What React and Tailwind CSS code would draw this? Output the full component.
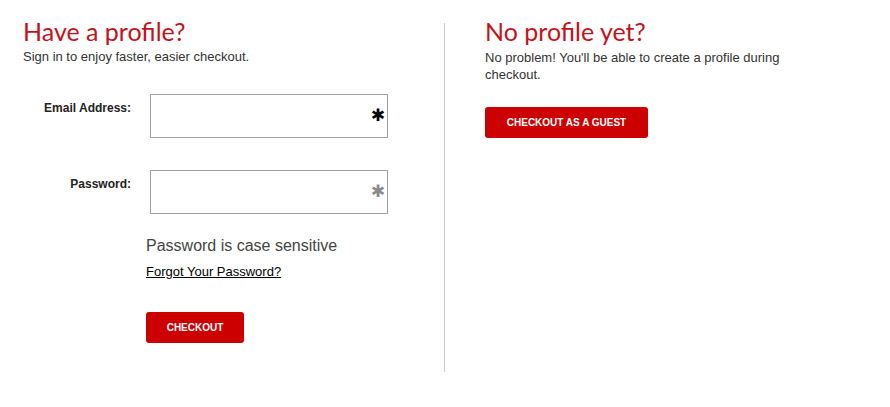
import React from 'react';

const FieldRow = ({ label, type, starClass }) => (
    <div className="flex items-start">
        <label className="w-[108px] text-right pt-[5px] text-[12px] font-bold text-[#222]">{label}</label>
        <div className="relative ml-[19px] w-[238px] h-[44px] border border-[#a0a0a0] bg-white">
            <input type={type} className="w-full h-full outline-none px-2 pr-8 text-[14px] bg-transparent" />
            <span className={`absolute right-[2px] top-[12px] text-[17px] leading-none font-['DejaVu_Sans',sans-serif] ${starClass}`}>✱</span>
        </div>
    </div>
);

const App = () => {
    return (
        <div className="w-[890px] h-[407px] bg-white flex font-['Liberation_Sans',Arial,sans-serif] text-[#333]">
            {/* Sign in */}
            <div className="w-[444px] pl-[23px] pt-[16px]">
                <h1 className="text-[25px] leading-[30px] text-[#c4121c] font-['Lato',sans-serif]">Have a profile?</h1>
                <p className="text-[13px] leading-[17px] mt-[2px]">Sign in to enjoy faster, easier checkout.</p>

                <div className="mt-[29px] flex flex-col gap-[32px]">
                    <FieldRow label="Email Address:" type="email" starClass="text-black" />
                    <FieldRow label="Password:" type="password" starClass="text-[#8a8a8a]" />
                </div>

                <div className="pl-[123px] mt-[21px]">
                    <p className="text-[16px] leading-[22px] text-[#444]">Password is case sensitive</p>
                    <a href="#" className="block mt-[6px] text-[13px] leading-[17px] text-black underline">Forgot Your Password?</a>
                    <button className="mt-[32px] w-[98px] h-[31px] rounded-[3px] bg-[#cc0000] text-white text-[10px] font-bold">
                        CHECKOUT
                    </button>
                </div>
            </div>

            {/* Divider */}
            <div className="w-px h-[349px] mt-[23px] bg-[#cccccc]" />

            {/* Guest */}
            <div className="pl-[40px] pt-[16px] w-[340px]">
                <h2 className="text-[25px] leading-[30px] text-[#c4121c] font-['Lato',sans-serif]">No profile yet?</h2>
                <p className="text-[13px] leading-[17px] mt-[3px] w-[310px]">
                    No problem! You'll be able to create a profile during checkout.
                </p>
                <button className="mt-[24px] w-[163px] h-[31px] rounded-[3px] bg-[#cc0000] text-white text-[10px] font-bold">
                    CHECKOUT AS A GUEST
                </button>
            </div>
        </div>
    );
};

export default App;
